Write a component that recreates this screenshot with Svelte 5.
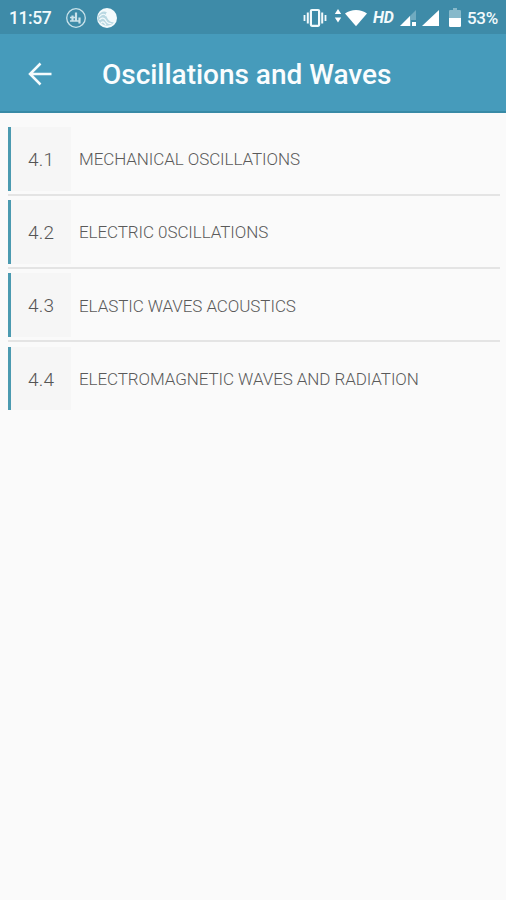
<script>
  const chapters = [
    { number: '4.1', title: 'MECHANICAL OSCILLATIONS' },
    { number: '4.2', title: 'ELECTRIC 0SCILLATIONS' },
    { number: '4.3', title: 'ELASTIC WAVES ACOUSTICS' },
    { number: '4.4', title: 'ELECTROMAGNETIC WAVES AND RADIATION' }
  ];
</script>

<div class="screen">
  <div class="status">
    <span class="clock">11:57</span>
    <svg class="chart" width="22" height="22" viewBox="0 0 22 22" fill="none" stroke="#c9e2ea">
      <circle cx="11" cy="11" r="9.3" stroke-width="1.3" />
      <path d="M7.500 14V8.500M11 14V5.500M14.500 16.500V10.500" stroke-width="2.200" />
      <path d="M5 10.500h6M5 14h10" stroke-width="1.300" />
    </svg>
    <svg class="globe" width="22" height="22" viewBox="0 0 22 22">
      <circle cx="11" cy="11" r="10" fill="#f3fafc" />
      <path d="M2 9C4 5 8 3 11 5.500c-2 1-1 3 0 5s3 5 7 5c-4 4-9 4-12 1.500C3 15 1 13 2 9z" fill="#b9d8e2" />
      <path d="M3 10c3-4 6-3 7-1M3.500 13c2-3 5-2 6 0s3 4 6 3.500M5 16c2-2 3-1 5 2" fill="none" stroke="#f3fafc" stroke-width="1.200" />
    </svg>
    <div class="system">
      <svg class="vibrate" width="24" height="20" viewBox="0 0 24 20" fill="none" stroke="#f2fafc">
        <rect x="7.9" y="2" width="8.2" height="15.8" rx="1" stroke-width="2.2" />
        <path d="M4.8 4.5v11M19.2 4.5v11" stroke-width="2" />
        <path d="M1.5 7v6M22.5 7v6" stroke-width="1.8" />
      </svg>
      <svg class="traffic" width="8" height="16" viewBox="0 0 8 16" fill="#fff">
        <path d="M4 1l3.200 5H.800zM.800 9.500h6.400L4 14.500z" />
      </svg>
      <svg class="wifi" width="24" height="18" viewBox="0 0 24 18" fill="#fff">
        <path d="M1 4.500C7-.2 17-.2 23 4.500L12 17.300z" />
      </svg>
      <span class="hd">HD</span>
      <svg class="signal" width="17" height="18" viewBox="0 0 17 18">
        <path d="M16 1v10h-5v6H0z" fill="#70abc0" />
        <path d="M10 7v10H0zM12 13h4v4h-4z" fill="#fff" />
      </svg>
      <svg class="full" width="17" height="18" viewBox="0 0 17 18" fill="#fff">
        <path d="M17 1v16H0z" />
      </svg>
      <svg class="battery" width="12" height="19" viewBox="0 0 12 19">
        <path d="M1.2 2H4V0h4v2h2.800Q12 2 12 3.200V10H0V3.200Q0 2 1.200 2z" fill="#87b9ca" />
        <path d="M0 10h12v7.800Q12 19 10.800 19H1.200Q0 19 0 17.800z" fill="#fff" />
      </svg>
      <span class="percent">53%</span>
    </div>
  </div>

  <header>
    <svg width="24" height="24" viewBox="0 0 24 24" fill="none" stroke="#f4fbfd" stroke-width="2.5">
      <path d="M12.500 1.500L2 12l10.500 10.500M2.500 12H23.500" />
    </svg>
    <h1>Oscillations and Waves</h1>
  </header>

  <main>
    {#each chapters as chapter}
      <div class="row">
        <div class="item">
          <span class="number">{chapter.number}</span>
          <span class="title">{chapter.title}</span>
        </div>
      </div>
    {/each}
  </main>
</div>

<style>
  :global(body) { margin: 0; }
  .screen {
    width: 506px;
    height: 900px;
    overflow: hidden;
    background: #fafafa;
    font-family: Roboto, sans-serif;
  }
  svg { display: block; flex: none; }
  .status {
    display: flex;
    align-items: center;
    box-sizing: border-box;
    height: 34px;
    padding: 1px 8px 0 9px;
    background: #3e8ba8;
    color: #f2fafc;
    font-weight: 500;
    font-size: 17.500px;
    white-space: nowrap;
  }
  .clock { width: 56px; line-height: 20px; letter-spacing: -0.450px; }
  .globe { margin-left: 9px; }
  .system { display: flex; align-items: center; margin-left: auto; }
  .traffic { margin-left: 7px; margin-top: -3px; }
  .wifi { margin-left: 2px; }
  .hd { margin-left: 5px; width: 22px; font-size: 16px; font-style: italic; font-weight: 700; line-height: 20px; letter-spacing: -0.300px; }
  .signal { margin-left: 5px; }
  .full { margin-left: 5px; }
  .battery { margin-left: 10px; }
  .percent { margin-left: 6px; width: 31px; font-size: 17px; line-height: 20px; letter-spacing: -0.300px; }
  header {
    display: flex;
    align-items: center;
    box-sizing: border-box;
    height: 79px;
    padding: 2px 28px 0 28px;
    background: #469bbb;
    border-bottom: 2px solid #388aa6;
  }
  h1 {
    margin: 2px 0 0 50px;
    color: #fafdfe;
    font-size: 28px;
    font-weight: 500;
    line-height: 36px;
    letter-spacing: -0.020px;
    white-space: nowrap;
  }
  main { padding: 14px 6px 0 8px; }
  .row { position: relative; height: 73.200px; }
  .row:not(:last-child)::after {
    content: '';
    position: absolute;
    left: 0;
    right: 0;
    top: 67px;
    height: 2px;
    background: #e4e4e4;
  }
  .item { display: flex; height: 63.500px; border-left: 3px solid #4b9ab0; box-sizing: border-box; align-items: center; }
  .number {
    width: 60px;
    height: 100%;
    box-sizing: border-box;
    padding: 1px 0 0 17px;
    background: #f6f6f6;
    color: #555;
    font-size: 19px;
    font-weight: 300;
    line-height: 64px;
    letter-spacing: 0.150px;
  }
  .title { padding: 1px 0 0 8px; color: #5a5a5a; font-size: 17px; font-weight: 300; line-height: 24px; letter-spacing: -0.080px; white-space: nowrap; }
</style>
